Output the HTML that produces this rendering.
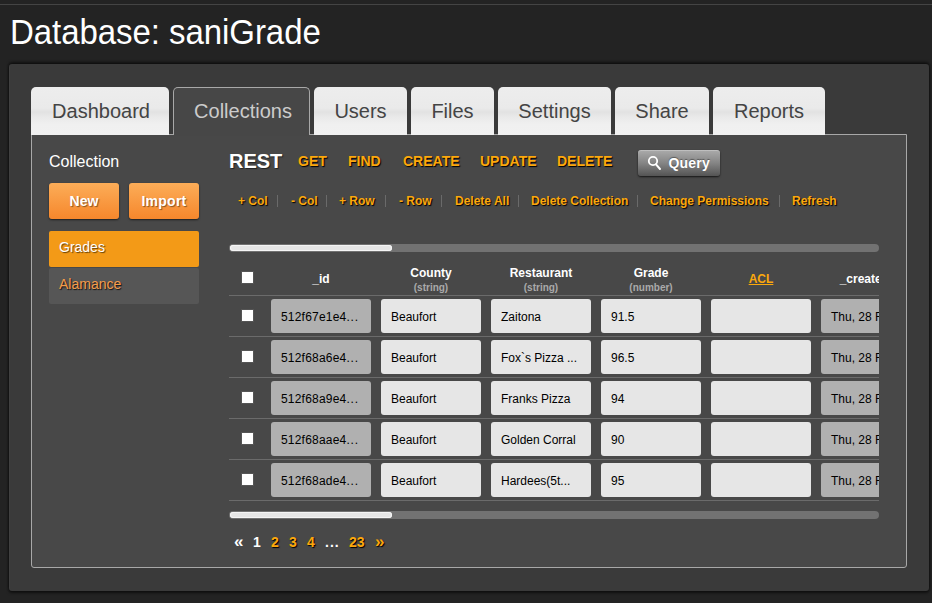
<!DOCTYPE html>
<html><head><meta charset="utf-8">
<style>
*{box-sizing:border-box;margin:0;padding:0}
html,body{width:932px;height:603px;overflow:hidden;background:#232323;font-family:"Liberation Sans",sans-serif}
.a{position:absolute;white-space:nowrap}
#topline{position:absolute;left:0;top:4px;width:932px;height:1px;background:#444}
#title{left:10px;top:13.5px;font-size:33px;line-height:38px;letter-spacing:-0.06px;color:#fff;transform:scaleY(1.035);transform-origin:0 19px}
#outer{position:absolute;left:9px;top:64px;width:920px;height:527px;border-radius:3px;background:#3a3a3a;box-shadow:0 0 2px rgba(0,0,0,.35),0 2px 3px rgba(0,0,0,.55),0 -2px 3px rgba(0,0,0,.5),inset 1px 0 0 rgba(255,255,255,.03)}
#inner{position:absolute;left:31px;top:134px;width:876px;height:434px;border:1px solid #a8a8a8;border-radius:0 0 3px 3px;background:#484848}
.tab{position:absolute;top:87px;height:48px;border-radius:5px 5px 0 0;background:linear-gradient(#ededed 0%,#eaeaea 44%,#e2e2e2 52%,#e9e9e9 62%,#f0f0f0 78%,#f1f1f1 100%);color:#444;font-size:20px;line-height:48px;text-align:center}
.tab.act{background:#474747;border:1px solid #a8a8a8;border-bottom:none;color:#ccc;height:48px;line-height:46px}
.btn{position:absolute;height:36px;border-radius:3px;background:linear-gradient(#fcad58,#f6872c);box-shadow:0 1px 2px rgba(0,0,0,.6);color:#fff;font-weight:bold;font-size:14px;line-height:36px;text-align:center;text-shadow:1px 1px 1px rgba(0,0,0,.45)}
.or{color:#fca80c;font-weight:bold;text-shadow:1px 1px 1px #000}
.sep{position:absolute;top:195px;width:1px;height:12px;background:#6a6a6a}
.hl{position:absolute;left:229px;width:650px;height:1px;background:#6b6b6b}
.cell{position:absolute;width:100px;height:34px;border-radius:3px;background:#e6e6e6;color:#000;font-size:12px;line-height:36px;padding-left:10px;overflow:hidden;white-space:nowrap}
.cell.g{background:#b0b0b0}
.cb{position:absolute;left:241px;width:13px;height:13px;background:#fff;border:1px solid #555}
.hd{position:absolute;color:#fff;font-weight:bold;font-size:12px;line-height:14px;text-align:center;width:100px}
.ty{display:block;color:#aaa;font-size:10px;line-height:12px;margin-top:2px}
.track{position:absolute;left:229px;width:650px;height:8px;border-radius:4px;background:#727272}
.thumb{position:absolute;left:1px;top:1px;width:162px;height:6px;border-radius:3px;background:#e6e6e6;box-shadow:inset 0 0 0 1px #f5f5f5}
.pg{position:absolute;top:534px;font-size:14px;font-weight:bold;line-height:16px}
</style></head><body>
<div id="topline"></div>
<div class="a" id="title">Database: saniGrade</div>
<div id="outer"></div>
<div id="inner"></div>
<!-- tabs -->
<div class="tab" style="left:31px;width:138px;padding-left:2px">Dashboard</div>
<div class="tab act" style="left:173px;width:137px;padding-left:3px">Collections</div>
<div class="tab" style="left:314px;width:93px">Users</div>
<div class="tab" style="left:411px;width:83px">Files</div>
<div class="tab" style="left:498px;width:113px">Settings</div>
<div class="tab" style="left:615px;width:94px">Share</div>
<div class="tab" style="left:713px;width:112px">Reports</div>
<!-- cover top border under active tab -->
<div style="position:absolute;left:174px;top:134px;width:135px;height:2px;background:#474747"></div>

<!-- sidebar -->
<div class="a" style="left:49px;top:153px;font-size:16px;line-height:18px;color:#fff">Collection</div>
<div class="btn" style="left:49px;top:183px;width:70px">New</div>
<div class="btn" style="left:129px;top:183px;width:70px;letter-spacing:0.25px">Import</div>
<div class="a" style="left:49px;top:231px;width:150px;height:36px;border-radius:2px;background:#f39a17;color:#fff;font-size:14px;line-height:33px;padding-left:10px;text-shadow:1px 1px 1px rgba(0,0,0,.6)">Grades</div>
<div class="a" style="left:49px;top:268px;width:150px;height:36px;border-radius:2px;background:#565656;color:#f59c4a;font-size:14px;line-height:32px;padding-left:10px;text-shadow:1px 1px 1px rgba(0,0,0,.8)">Alamance</div>

<!-- REST bar -->
<div class="a" style="left:229px;top:150px;font-size:20px;line-height:23px;font-weight:bold;color:#fff;text-shadow:1px 1px 1px #222">REST</div>
<div class="a or" style="left:298px;top:153px;font-size:14px;line-height:16px">GET</div>
<div class="a or" style="left:348px;top:153px;font-size:14px;line-height:16px">FIND</div>
<div class="a or" style="left:403px;top:153px;font-size:14px;line-height:16px">CREATE</div>
<div class="a or" style="left:480px;top:153px;font-size:14px;line-height:16px">UPDATE</div>
<div class="a or" style="left:557px;top:153px;font-size:14px;line-height:16px">DELETE</div>
<div class="a" style="left:638px;top:150px;width:82px;height:26px;border-radius:3px;background:linear-gradient(#ababab,#858585 50%,#545454);box-shadow:0 1px 2px rgba(0,0,0,.7),inset 0 1px 0 rgba(255,255,255,.25)">
  <svg width="20" height="20" style="position:absolute;left:7px;top:3px" viewBox="0 0 20 20"><circle cx="8" cy="8" r="4.2" fill="none" stroke="#fff" stroke-width="1.8"/><line x1="11" y1="11.3" x2="15" y2="16" stroke="#fff" stroke-width="2" stroke-linecap="round"/></svg>
  <span class="a" style="left:30.5px;top:4.5px;font-size:14px;line-height:16px;font-weight:bold;letter-spacing:0.2px;color:#fff;text-shadow:0 -1px 1px rgba(0,0,0,.4)">Query</span>
</div>

<!-- action row -->
<div class="a or" style="left:238px;top:194px;font-size:12px;line-height:14px">+ Col</div>
<div class="sep" style="left:277px"></div>
<div class="a or" style="left:291px;top:194px;font-size:12px;line-height:14px">- Col</div>
<div class="sep" style="left:326px"></div>
<div class="a or" style="left:339px;top:194px;font-size:12px;line-height:14px">+ Row</div>
<div class="sep" style="left:385px"></div>
<div class="a or" style="left:399px;top:194px;font-size:12px;line-height:14px">- Row</div>
<div class="sep" style="left:441px"></div>
<div class="a or" style="left:455px;top:194px;font-size:12px;line-height:14px">Delete All</div>
<div class="sep" style="left:518px"></div>
<div class="a or" style="left:531px;top:194px;font-size:12px;line-height:14px">Delete Collection</div>
<div class="sep" style="left:637px"></div>
<div class="a or" style="left:650px;top:194px;font-size:12px;line-height:14px">Change Permissions</div>
<div class="sep" style="left:779px"></div>
<div class="a or" style="left:792px;top:194px;font-size:12px;line-height:14px">Refresh</div>

<!-- scrollbar top -->
<div class="track" style="top:244px"><div class="thumb"></div></div>

<!-- header -->
<div class="cb" style="top:271px"></div>
<div class="hd" style="left:271px;top:272px">_id</div>
<div class="hd" style="left:381px;top:266px">County<span class="ty">(string)</span></div>
<div class="hd" style="left:491px;top:266px">Restaurant<span class="ty">(string)</span></div>
<div class="hd" style="left:601px;top:266px">Grade<span class="ty">(number)</span></div>
<div class="hd" style="left:711px;top:272px;color:#fca80c;text-decoration:underline">ACL</div>
<div style="position:absolute;left:229px;top:260px;width:650px;height:40px;overflow:hidden">
  <div class="hd" style="left:594px;top:12px">_created_at</div>
</div>
<div class="hl" style="top:295px"></div>

<!-- rows -->
<div id="rows" style="position:absolute;left:0;top:0;width:932px;height:603px">
<div class="cb" style="top:309px"></div>
<div class="cell g" style="left:271px;top:299px;letter-spacing:0.2px">512f67e1e4<span style="letter-spacing:0.8px">...</span></div>
<div class="cell" style="left:381px;top:299px">Beaufort</div>
<div class="cell" style="left:491px;top:299px">Zaitona</div>
<div class="cell" style="left:601px;top:299px">91.5</div>
<div class="cell" style="left:711px;top:299px"></div>
<div class="cell g" style="left:821px;top:299px;width:58px;border-radius:3px 0 0 3px">Thu, 28 Feb 2013</div>
<div class="hl" style="top:336px"></div>
<div class="cb" style="top:350px"></div>
<div class="cell g" style="left:271px;top:340px;letter-spacing:0.2px">512f68a6e4<span style="letter-spacing:0.8px">...</span></div>
<div class="cell" style="left:381px;top:340px">Beaufort</div>
<div class="cell" style="left:491px;top:340px">Fox`s Pizza ...</div>
<div class="cell" style="left:601px;top:340px">96.5</div>
<div class="cell" style="left:711px;top:340px"></div>
<div class="cell g" style="left:821px;top:340px;width:58px;border-radius:3px 0 0 3px">Thu, 28 Feb 2013</div>
<div class="hl" style="top:377px"></div>
<div class="cb" style="top:391px"></div>
<div class="cell g" style="left:271px;top:381px;letter-spacing:0.2px">512f68a9e4<span style="letter-spacing:0.8px">...</span></div>
<div class="cell" style="left:381px;top:381px">Beaufort</div>
<div class="cell" style="left:491px;top:381px">Franks Pizza</div>
<div class="cell" style="left:601px;top:381px">94</div>
<div class="cell" style="left:711px;top:381px"></div>
<div class="cell g" style="left:821px;top:381px;width:58px;border-radius:3px 0 0 3px">Thu, 28 Feb 2013</div>
<div class="hl" style="top:418px"></div>
<div class="cb" style="top:432px"></div>
<div class="cell g" style="left:271px;top:422px;letter-spacing:0.2px">512f68aae4<span style="letter-spacing:0.8px">...</span></div>
<div class="cell" style="left:381px;top:422px">Beaufort</div>
<div class="cell" style="left:491px;top:422px">Golden Corral</div>
<div class="cell" style="left:601px;top:422px">90</div>
<div class="cell" style="left:711px;top:422px"></div>
<div class="cell g" style="left:821px;top:422px;width:58px;border-radius:3px 0 0 3px">Thu, 28 Feb 2013</div>
<div class="hl" style="top:459px"></div>
<div class="cb" style="top:473px"></div>
<div class="cell g" style="left:271px;top:463px;letter-spacing:0.2px">512f68ade4<span style="letter-spacing:0.8px">...</span></div>
<div class="cell" style="left:381px;top:463px">Beaufort</div>
<div class="cell" style="left:491px;top:463px">Hardees(5t...</div>
<div class="cell" style="left:601px;top:463px">95</div>
<div class="cell" style="left:711px;top:463px"></div>
<div class="cell g" style="left:821px;top:463px;width:58px;border-radius:3px 0 0 3px">Thu, 28 Feb 2013</div>
<div class="hl" style="top:500px"></div>
</div>

<!-- scrollbar bottom -->
<div class="track" style="top:511px"><div class="thumb"></div></div>

<!-- pagination -->
<div class="pg" style="left:234px;top:534px;color:#fff;font-size:17px">«</div>
<div class="pg" style="left:253px;color:#fff">1</div>
<div class="pg or" style="left:271px">2</div>
<div class="pg or" style="left:289px">3</div>
<div class="pg or" style="left:307px">4</div>
<div class="pg" style="left:325px;color:#fff;letter-spacing:1px">...</div>
<div class="pg or" style="left:349px">23</div>
<div class="pg or" style="left:375px;top:534px;font-size:17px">»</div>
</body></html>
